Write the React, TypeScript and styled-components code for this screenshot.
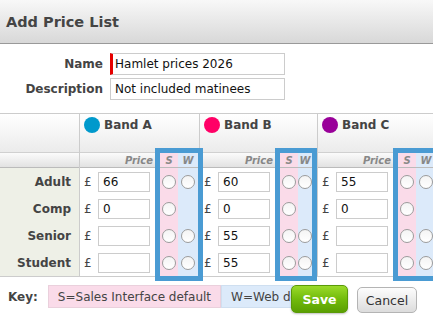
import React from 'react';
import styled, { createGlobalStyle } from 'styled-components';

const GlobalStyle = createGlobalStyle`
  html, body {
    margin: 0;
    padding: 0;
    background: #fff;
  }
  body {
    font-family: "DejaVu Sans", Verdana, sans-serif;
    font-size: 12px;
    color: #333;
  }
  * {
    box-sizing: border-box;
  }
`;

const Page = styled.div`
  width: 433px;
  height: 316px;
  overflow: hidden;
  background: #fff;
`;

const TitleBar = styled.header`
  height: 44px;
  display: flex;
  align-items: center;
  padding: 0 6px;
  background: linear-gradient(#f8f8f8, #d8d8d8);
  border-bottom: 1px solid #999;
`;

const Title = styled.h1`
  margin: 0;
  font-size: 14.5px;
  font-weight: bold;
  color: #444;
`;

const Form = styled.div`
  display: flex;
  flex-direction: column;
  gap: 3px;
  padding-top: 9px;
`;

const FieldRow = styled.div`
  display: flex;
  align-items: center;
  gap: 7px;
`;

const FieldLabel = styled.label`
  width: 103px;
  text-align: right;
  font-weight: bold;
  color: #444;
`;

const TextInput = styled.input<{ $required?: boolean }>`
  width: 175px;
  height: 22px;
  margin: 0;
  border: 1px solid #ccc;
  border-left: ${p => (p.$required ? '3px solid #e60000' : '1px solid #ccc')};
  padding: 0 0 0 ${p => (p.$required ? '2px' : '4px')};
  font: inherit;
  color: #111;
  outline: none;
`;

const Grid = styled.div`
  margin-top: 13px;
  display: flex;
  border-top: 1px solid #ccc;
  border-bottom: 1px solid #ccc;
`;

const LabelCol = styled.div`
  width: 80px;
  flex: none;
  border-right: 1px solid #ccc;
  display: flex;
  flex-direction: column;
`;

const HeadCell = styled.div`
  height: 39px;
  border-bottom: 1px solid #d0d0d0;
  background: linear-gradient(#fff, #ebebeb);
  padding: 3px 4px 0;
`;

const SubHead = styled.div<{ $align?: string; $plain?: boolean }>`
  height: 15px;
  border-bottom: 1px solid #bbb;
  background: ${p => (p.$plain ? 'transparent' : 'linear-gradient(#fbfbfb, #e2e2e2)')};
  display: flex;
  align-items: center;
  justify-content: ${p => p.$align || 'flex-end'};
  padding-right: ${p => (p.$align ? '0' : '7px')};
  font-size: 10px;
  font-weight: bold;
  font-style: italic;
  color: #888;
`;

const RowLabel = styled.div`
  height: 27px;
  background: #eef0e7;
  display: flex;
  align-items: center;
  justify-content: flex-end;
  padding-right: 8px;
  font-weight: bold;
  color: #444;
`;

const Band = styled.div<{ $width?: number }>`
  width: ${p => (p.$width ? `${p.$width}px` : 'auto')};
  flex: ${p => (p.$width ? 'none' : '1')};
  border-right: ${p => (p.$width ? '1px solid #ccc' : 'none')};
  display: flex;
  flex-direction: column;
`;

const BandTitle = styled.div`
  display: flex;
  align-items: center;
  gap: 4px;
  height: 16px;
  font-weight: bold;
  color: #444;
  white-space: nowrap;
`;

const Dot = styled.span<{ $color: string }>`
  width: 16px;
  height: 16px;
  border-radius: 50%;
  background: ${p => p.$color};
  flex: none;
`;

const BandBody = styled.div`
  display: flex;
`;

const PriceCol = styled.div`
  width: 80px;
  flex: none;
  display: flex;
  flex-direction: column;
`;

const PriceRow = styled.div`
  height: 27px;
  display: flex;
  align-items: center;
`;

const Currency = styled.span`
  width: 18px;
  padding-left: 4px;
  color: #444;
`;

const PriceInput = styled.input`
  width: 52px;
  height: 20px;
  margin: 0;
  border: 1px solid #ccc;
  padding: 0 0 0 4px;
  font: inherit;
  color: #111;
  outline: none;
`;

const SWGroup = styled.div`
  display: flex;
  flex: none;
  position: relative;
  z-index: 1;
  outline: 5px solid #4a9bd3;
`;

const SWCol = styled.div<{ $tone: 'pink' | 'blue'; $width: number }>`
  width: ${p => p.$width}px;
  overflow: hidden;
  display: flex;
  flex-direction: column;
  background: ${p => (p.$tone === 'pink' ? '#fadbe9' : '#dceafa')};
`;

const RadioCell = styled.div`
  height: 27px;
  display: flex;
  align-items: center;
  justify-content: center;
`;

const Radio = styled.input.attrs({ type: 'radio' })`
  appearance: none;
  margin: 0;
  width: 14px;
  height: 14px;
  flex: none;
  border-radius: 50%;
  border: 1px solid #9c9c9c;
  background: linear-gradient(#f4f4f4, #fff);
`;

const Footer = styled.footer`
  position: relative;
  height: 39px;
  display: flex;
  align-items: center;
  gap: 10px;
  padding-left: 8px;
  white-space: nowrap;
`;

const KeyLabel = styled.span`
  font-weight: bold;
  color: #444;
`;

const KeyList = styled.div`
  display: flex;
`;

const KeyItem = styled.span<{ $tone: 'pink' | 'blue'; $clip?: number }>`
  height: 23px;
  display: flex;
  align-items: center;
  padding: 0 9px;
  max-width: ${p => (p.$clip ? `${p.$clip}px` : 'none')};
  overflow: hidden;
  border: 1px solid ${p => (p.$tone === 'pink' ? '#ead0dc' : '#cfdff0')};
  background: ${p => (p.$tone === 'pink' ? '#fadbe9' : '#dceafa')};
  color: #444;
`;

const ButtonBar = styled.div`
  position: absolute;
  right: 16px;
  bottom: 3px;
  display: flex;
  align-items: flex-end;
  gap: 9px;
`;

const Button = styled.button<{ $primary?: boolean }>`
  margin: 0;
  width: ${p => (p.$primary ? '57px' : '60px')};
  height: ${p => (p.$primary ? '28px' : '26px')};
  border-radius: 5px;
  font-family: inherit;
  font-size: 12.5px;
  font-weight: ${p => (p.$primary ? 'bold' : 'normal')};
  color: ${p => (p.$primary ? '#fff' : '#333')};
  border: 1px solid ${p => (p.$primary ? '#5a9a08' : '#b4b4b4')};
  background: ${p =>
    p.$primary
      ? 'linear-gradient(#9ada2a, #72bb0c 50%, #5a9f02)'
      : 'linear-gradient(#fdfdfd, #dcdcdc)'};
  box-shadow: ${p => (p.$primary ? '0 1px 2px rgba(0,0,0,0.25)' : 'none')};
  padding: 0;
`;

const bands = [
  { name: 'Band A', color: '#0099cc', width: 120, wWidth: 20 },
  { name: 'Band B', color: '#ff0066', width: 118, wWidth: 14 },
  { name: 'Band C', color: '#990099', width: 0, wWidth: 20 },
];

const rows = [
  { label: 'Adult', prices: ['66', '60', '55'], web: true },
  { label: 'Comp', prices: ['0', '0', '0'], web: false },
  { label: 'Senior', prices: ['', '55', ''], web: true },
  { label: 'Student', prices: ['', '55', ''], web: true },
];

export default function App() {
  return (
    <Page>
      <GlobalStyle />
      <TitleBar>
        <Title>Add Price List</Title>
      </TitleBar>

      <Form>
        <FieldRow>
          <FieldLabel>Name</FieldLabel>
          <TextInput $required defaultValue="Hamlet prices 2026" />
        </FieldRow>
        <FieldRow>
          <FieldLabel>Description</FieldLabel>
          <TextInput defaultValue="Not included matinees" />
        </FieldRow>
      </Form>

      <Grid>
        <LabelCol>
          <HeadCell />
          <SubHead />
          {rows.map(r => (
            <RowLabel key={r.label}>{r.label}</RowLabel>
          ))}
        </LabelCol>

        {bands.map((band, bi) => (
          <Band key={band.name} $width={band.width || undefined}>
            <HeadCell>
              <BandTitle>
                <Dot $color={band.color} />
                {band.name}
              </BandTitle>
            </HeadCell>
            <BandBody>
              <PriceCol>
                <SubHead>Price</SubHead>
                {rows.map(r => (
                  <PriceRow key={r.label}>
                    <Currency>£</Currency>
                    <PriceInput defaultValue={r.prices[bi]} />
                  </PriceRow>
                ))}
              </PriceCol>
              <SWGroup>
                <SWCol $tone="pink" $width={18}>
                  <SubHead $plain $align="center">S</SubHead>
                  {rows.map(r => (
                    <RadioCell key={r.label}>
                      <Radio name={`s-${bi}`} />
                    </RadioCell>
                  ))}
                </SWCol>
                <SWCol $tone="blue" $width={band.wWidth}>
                  <SubHead $plain $align="center">W</SubHead>
                  {rows.map(r => (
                    <RadioCell key={r.label}>{r.web && <Radio name={`w-${bi}`} />}</RadioCell>
                  ))}
                </SWCol>
              </SWGroup>
            </BandBody>
          </Band>
        ))}
      </Grid>

      <Footer>
        <KeyLabel>Key:</KeyLabel>
        <KeyList>
          <KeyItem $tone="pink">S=Sales Interface default</KeyItem>
          <KeyItem $tone="blue" $clip={72}>W=Web default</KeyItem>
        </KeyList>
        <ButtonBar>
          <Button $primary>Save</Button>
          <Button>Cancel</Button>
        </ButtonBar>
      </Footer>
    </Page>
  );
}
